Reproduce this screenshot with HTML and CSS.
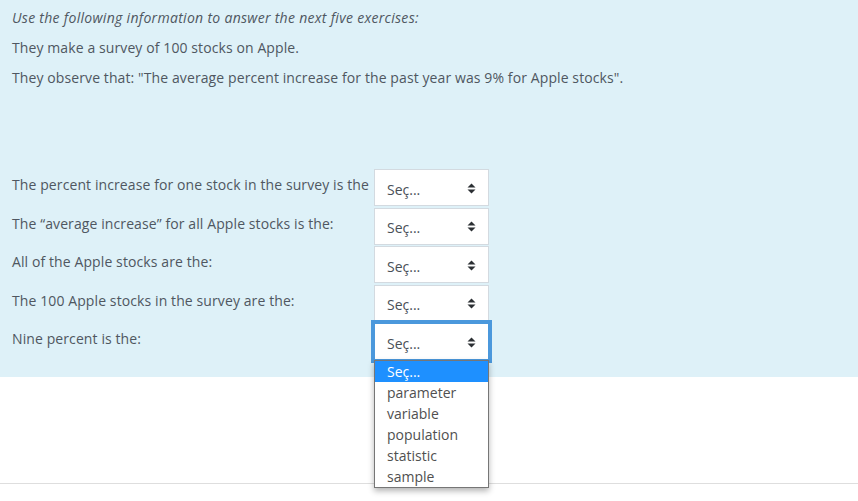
FILE: index.html
```html
<!DOCTYPE html>
<html lang="en">
<head>
<meta charset="utf-8">
<title>Question</title>
<link rel="stylesheet" href="styles.css">
</head>
<body>
<div class="formulation">
  <p class="intro"><em>Use the following information to answer the next five exercises:</em></p>
  <p>They make a survey of 100 stocks on Apple.</p>
  <p class="last">They observe that: "The average percent increase for the past year was 9% for Apple stocks".</p>
  <div class="answers">
    <div class="row">
      <span class="label">The percent increase for one stock in the survey is the</span>
      <div class="select"><span>Seç...</span><svg class="arrows" width="9" height="11" viewBox="0 0 9 11"><path d="M4.5 0.5 L8.5 4.5 L0.5 4.5 Z M4.5 10.5 L8.5 6.5 L0.5 6.5 Z"/></svg></div>
    </div>
    <div class="row">
      <span class="label">The “average increase” for all Apple stocks is the:</span>
      <div class="select"><span>Seç...</span><svg class="arrows" width="9" height="11" viewBox="0 0 9 11"><path d="M4.5 0.5 L8.5 4.5 L0.5 4.5 Z M4.5 10.5 L8.5 6.5 L0.5 6.5 Z"/></svg></div>
    </div>
    <div class="row">
      <span class="label">All of the Apple stocks are the:</span>
      <div class="select"><span>Seç...</span><svg class="arrows" width="9" height="11" viewBox="0 0 9 11"><path d="M4.5 0.5 L8.5 4.5 L0.5 4.5 Z M4.5 10.5 L8.5 6.5 L0.5 6.5 Z"/></svg></div>
    </div>
    <div class="row">
      <span class="label">The 100 Apple stocks in the survey are the:</span>
      <div class="select"><span>Seç...</span><svg class="arrows" width="9" height="11" viewBox="0 0 9 11"><path d="M4.5 0.5 L8.5 4.5 L0.5 4.5 Z M4.5 10.5 L8.5 6.5 L0.5 6.5 Z"/></svg></div>
    </div>
    <div class="row">
      <span class="label">Nine percent is the:</span>
      <div class="select focused"><span>Seç...</span><svg class="arrows" width="9" height="11" viewBox="0 0 9 11"><path d="M4.5 0.5 L8.5 4.5 L0.5 4.5 Z M4.5 10.5 L8.5 6.5 L0.5 6.5 Z"/></svg>
        <ul class="dropdown">
          <li class="active">Seç...</li>
          <li>parameter</li>
          <li>variable</li>
          <li>population</li>
          <li>statistic</li>
          <li>sample</li>
        </ul>
      </div>
    </div>
  </div>
</div>
<div class="footer-line"></div>
</body>
</html>
```

FILE: styles.css
```css
html, body {
  margin: 0;
  padding: 0;
  background: #ffffff;
}

body {
  min-height: 501px;
  font-family: "Open Sans", "Noto Sans", "Liberation Sans", sans-serif;
  font-size: 14px;
  line-height: 21px;
  letter-spacing: 0.1px;
  color: #4f5761;
}

.formulation {
  background: #def1f8;
  padding: 7px 12px 17px 12px;
}

.formulation p {
  margin: 0 0 9px 0;
}

.formulation p.last {
  margin-bottom: 0;
}

.intro em {
  font-style: italic;
  letter-spacing: 0.3px;
}

.answers {
  margin-top: 81px;
  display: flex;
  flex-direction: column;
  gap: 1.5px;
}

.row {
  display: flex;
  align-items: center;
}

.label {
  width: 362px;
  flex: none;
  padding-bottom: 6px;
  white-space: nowrap;
}

.select {
  position: relative;
  box-sizing: border-box;
  width: 115px;
  height: 37px;
  background: #ffffff;
  border: 1px solid #d3dae0;
  display: flex;
  align-items: center;
  justify-content: space-between;
  padding: 0 12px 0 12px;
  color: #495057;
  letter-spacing: 0;
}

.select span {
  padding-top: 3px;
}

.arrows {
  fill: #2b2f33;
  margin-top: 1px;
}

.select.focused {
  border-color: #4b98dc;
  box-shadow: 0 0 0 3px #4b98dc;
}

.dropdown {
  position: absolute;
  top: 100%;
  left: -1px;
  width: 115px;
  box-sizing: border-box;
  margin: 1px 0 0 0;
  padding: 0;
  list-style: none;
  background: #ffffff;
  border: 1px solid #767676;
  box-shadow: 0 3px 6px rgba(0, 0, 0, 0.3);
  z-index: 10;
}

.dropdown li {
  height: 21px;
  line-height: 21px;
  padding-left: 12px;
  color: #505050;
}

.dropdown li.active {
  background: #1e90ff;
  color: #ffffff;
}

.footer-line {
  margin-top: 106px;
  border-top: 1px solid #dedede;
}
```
